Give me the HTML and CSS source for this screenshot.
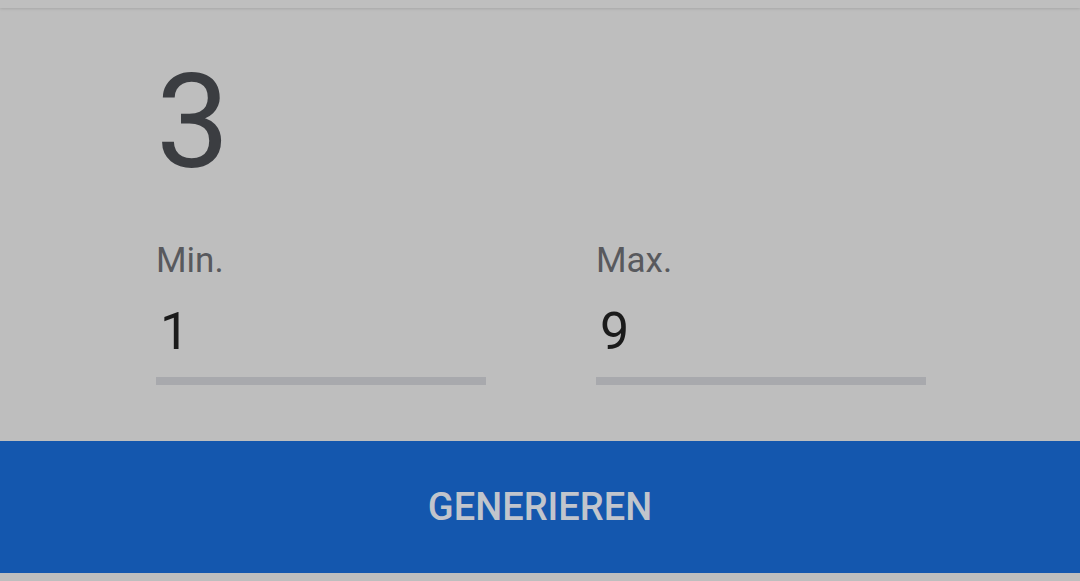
FILE: index.html
```html
<!DOCTYPE html>
<html lang="de">
<head>
<meta charset="utf-8">
<link rel="stylesheet" href="styles.css">
</head>
<body>
<div class="topbar"></div>
<main class="content">
  <div class="result">3</div>
  <div class="fields">
    <div class="field">
      <div class="label">Min.</div>
      <div class="value">1</div>
      <div class="line"></div>
    </div>
    <div class="field">
      <div class="label">Max.</div>
      <div class="value">9</div>
      <div class="line"></div>
    </div>
  </div>
</main>
<div class="button">GENERIEREN</div>
</body>
</html>
```
FILE: styles.css
```css
html, body {
  margin: 0;
  padding: 0;
  background: #bebebe;
  font-family: Roboto, "Liberation Sans", sans-serif;
  width: 1080px;
  height: 581px;
  overflow: hidden;
}
.topbar {
  height: 8px;
  background: #bfbfbf;
  box-shadow: 0 1px 3px rgba(0,0,0,0.12);
  position: relative;
}
.content {
  padding: 48px 0 0 156px;
  height: 433px;
  box-sizing: border-box;
}
.result {
  font-size: 131px;
  line-height: 132px;
  height: 132px;
  color: #3b3d41;
}
.fields {
  display: flex;
  gap: 110px;
  margin-top: 53px;
}
.field {
  width: 330px;
}
.label {
  font-size: 35px;
  line-height: 40px;
  color: #58595d;
}
.value {
  font-size: 52px;
  line-height: 60px;
  margin-top: 21px;
  padding-left: 4px;
  color: #1b1b1b;
}
.line {
  height: 8px;
  margin-top: 15px;
  background: #a8a9ad;
}
.button {
  height: 132px;
  line-height: 132px;
  background: #1457ae;
  color: #c1c5cc;
  text-align: center;
  font-size: 38px;
  font-weight: 500;
}
```
